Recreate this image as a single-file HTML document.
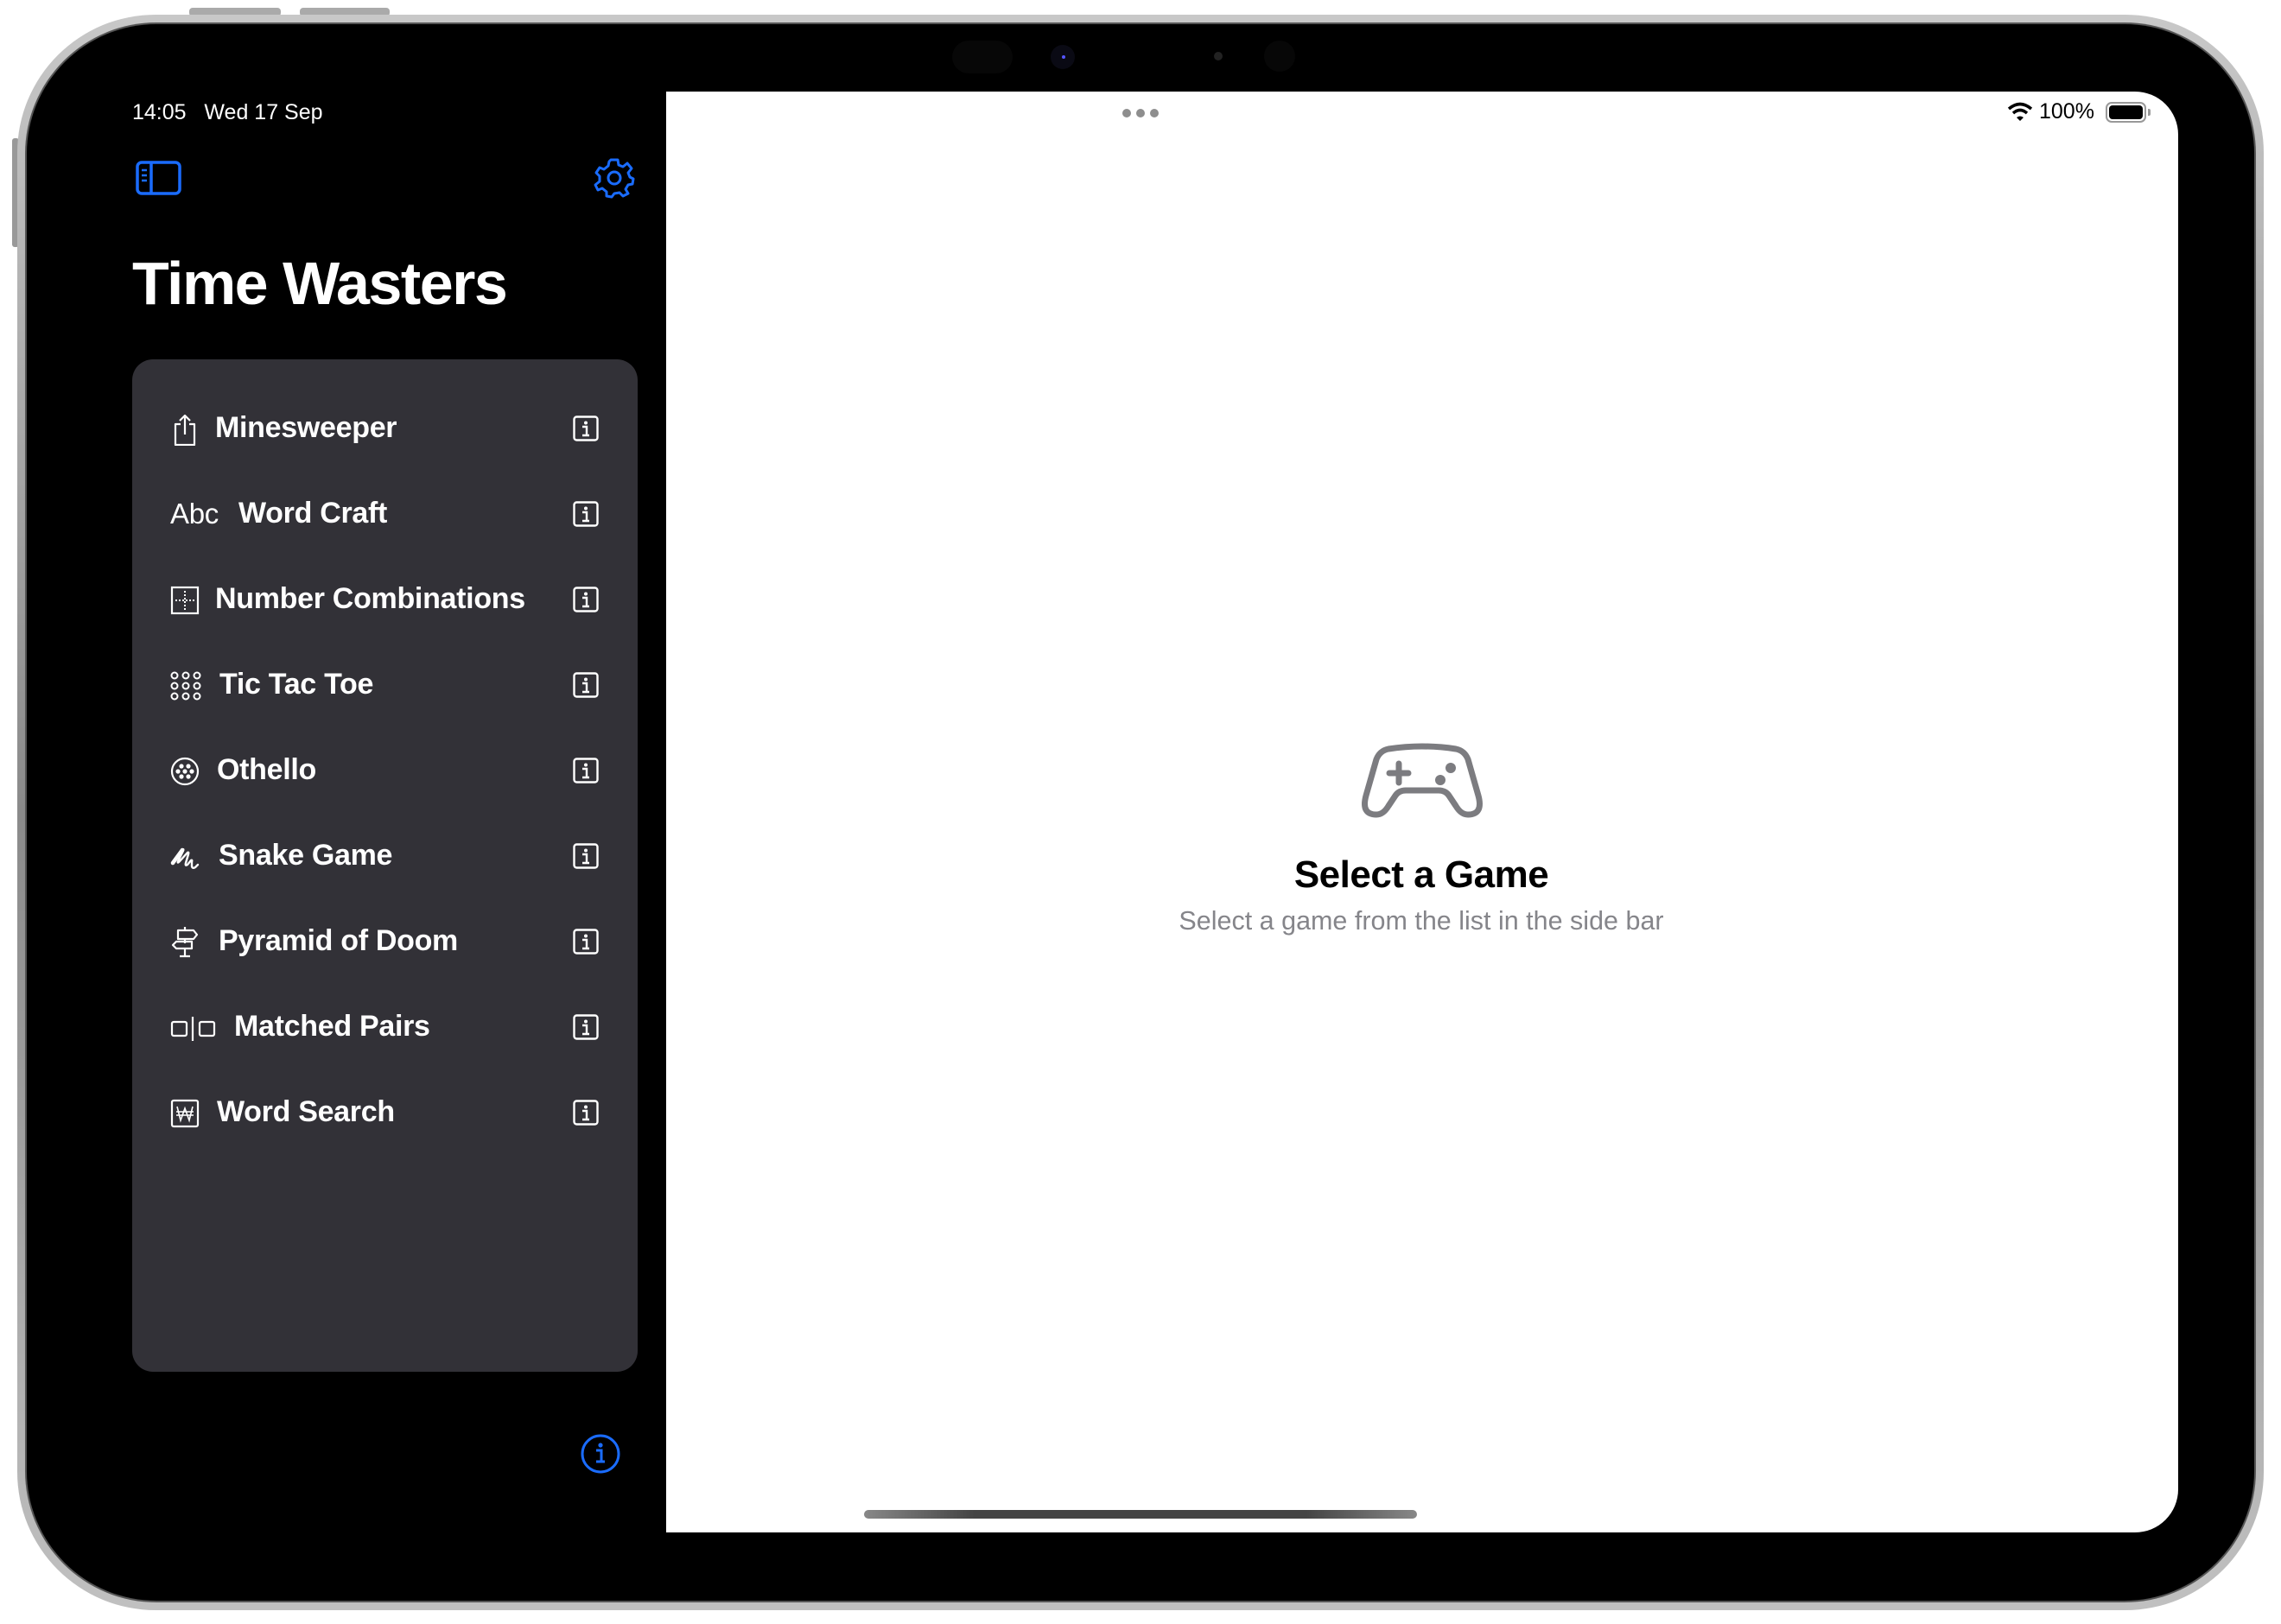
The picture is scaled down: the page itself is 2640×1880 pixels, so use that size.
<!DOCTYPE html>
<html><head><meta charset="utf-8"><style>
*{margin:0;padding:0;box-sizing:border-box}
body{width:2640px;height:1880px;background:#fff;position:relative;overflow:hidden;font-family:"Liberation Sans",sans-serif}
.abs{position:absolute}
.frame{left:20px;top:17px;width:2600px;height:1847px;border-radius:160px;background:linear-gradient(#c8c8c8,#8a8a8a 50%,#c0c0c0);}
.screen{left:31px;top:28px;width:2578px;height:1825px;border-radius:150px;background:#000;box-shadow:0 0 0 2px #555}
.white{left:771px;top:106px;width:1750px;height:1668px;background:#fff;border-radius:0 50px 50px 0}
.card{left:153px;top:416px;width:585px;height:1172px;background:#323137;border-radius:24px}
.row{position:absolute;left:0;width:585px;height:99px;display:flex;align-items:center;color:#fff;font-size:34px;font-weight:bold;letter-spacing:-0.3px}
.row .ic{position:absolute;left:44px;top:34px;width:34px;height:34px}
.row .t{position:absolute}
.row .inf{position:absolute;left:510px;top:35px;width:30px;height:30px}
</style></head><body>
<div class="abs" style="left:219px;top:9px;width:106px;height:10px;background:#aaa;border-radius:4px"></div>
<div class="abs" style="left:347px;top:9px;width:104px;height:10px;background:#aaa;border-radius:4px"></div>
<div class="abs" style="left:14px;top:160px;width:8px;height:126px;background:#999;border-radius:3px"></div>
<div class="abs frame"></div>
<div class="abs screen"></div>
<div class="abs" style="left:1102px;top:47px;width:70px;height:38px;border-radius:19px;background:#070707"></div>
<div class="abs" style="left:1216px;top:52px;width:28px;height:28px;border-radius:50%;background:#0a0a14"></div>
<div class="abs" style="left:1229px;top:64px;width:4px;height:4px;border-radius:50%;background:#55f"></div>
<div class="abs" style="left:1405px;top:60px;width:10px;height:10px;border-radius:50%;background:#222"></div>
<div class="abs" style="left:1463px;top:47px;width:36px;height:36px;border-radius:50%;background:#070707"></div>
<div class="abs white"></div>
<div class="abs" style="left:153px;top:116px;color:#fff;font-size:25px;white-space:pre">14:05   Wed 17 Sep</div>
<svg class="abs" style="left:156px;top:185px" width="56" height="42" viewBox="0 0 56 42"><rect x="3" y="3" width="49" height="36" rx="5" fill="none" stroke="#1a6cff" stroke-width="3.5"/><line x1="19" y1="3" x2="19" y2="39" stroke="#1a6cff" stroke-width="3.5"/><path d="M8 12h6M8 18h6M8 24h6" stroke="#1a6cff" stroke-width="2.5"/></svg>
<svg class="abs" style="left:686px;top:181px" width="50" height="50" viewBox="-25 -25 50 50"><g fill="none" stroke="#1a6cff" stroke-width="3"><path d="M-4 -21 L4 -21 L5 -15 L10 -13 L15 -17 L20 -11 L16 -6 L18 -1 L22 1 L21 7 L16 8 L13 13 L16 18 L10 21 L6 17 L0 18 L-3 22 L-9 21 L-9 16 L-14 12 L-19 14 L-22 8 L-17 4 L-17 -2 L-21 -6 L-17 -12 L-12 -10 L-7 -14 L-6 -19 Z" stroke-linejoin="round"/><circle r="7"/></g></svg>
<div class="abs" style="left:153px;top:288px;color:#fff;font-size:70px;font-weight:bold;letter-spacing:-1.5px">Time Wasters</div>
<div class="abs card">
<div class="row" style="top:30px"><svg class="ic" viewBox="0 0 34 34" style="top:30px;height:40px"><path d="M12 12H6v24h22V12h-6M17 2v22M11 8l6-6 6 6" fill="none" stroke="#fff" stroke-width="2.2" stroke-linejoin="round"/></svg><span class="t" style="left:96px">Minesweeper</span><svg class="inf" viewBox="0 0 30 30"><rect x="1.5" y="1.5" width="27" height="27" rx="3" fill="none" stroke="#fff" stroke-width="2.4"/><circle cx="15" cy="8.5" r="2" fill="#fff"/><path d="M11 13h5v10M11 23h8" stroke="#fff" stroke-width="2.4" fill="none"/></svg></div>
<div class="row" style="top:129px"><span class="t" style="left:44px;font-weight:normal;font-size:33px">Abc</span><span class="t" style="left:123px">Word Craft</span><svg class="inf" viewBox="0 0 30 30"><rect x="1.5" y="1.5" width="27" height="27" rx="3" fill="none" stroke="#fff" stroke-width="2.4"/><circle cx="15" cy="8.5" r="2" fill="#fff"/><path d="M11 13h5v10M11 23h8" stroke="#fff" stroke-width="2.4" fill="none"/></svg></div>
<div class="row" style="top:228px"><svg class="ic" viewBox="0 0 34 34"><rect x="2" y="2" width="30" height="30" fill="none" stroke="#fff" stroke-width="2.2"/><path d="M17 6v22M6 17h22" stroke="#fff" stroke-width="2" stroke-dasharray="2 2"/></svg><span class="t" style="left:96px">Number Combinations</span><svg class="inf" viewBox="0 0 30 30"><rect x="1.5" y="1.5" width="27" height="27" rx="3" fill="none" stroke="#fff" stroke-width="2.4"/><circle cx="15" cy="8.5" r="2" fill="#fff"/><path d="M11 13h5v10M11 23h8" stroke="#fff" stroke-width="2.4" fill="none"/></svg></div>
<div class="row" style="top:327px"><svg class="ic" viewBox="0 0 36 34" style="width:36px"><g fill="none" stroke="#fff" stroke-width="2"><circle cx="5" cy="5" r="3.5"/><circle cx="18" cy="5" r="3.5"/><circle cx="31" cy="5" r="3.5"/><circle cx="5" cy="17" r="3.5"/><circle cx="18" cy="17" r="3.5"/><circle cx="31" cy="17" r="3.5"/><circle cx="5" cy="29" r="3.5"/><circle cx="18" cy="29" r="3.5"/><circle cx="31" cy="29" r="3.5"/></g></svg><span class="t" style="left:101px">Tic Tac Toe</span><svg class="inf" viewBox="0 0 30 30"><rect x="1.5" y="1.5" width="27" height="27" rx="3" fill="none" stroke="#fff" stroke-width="2.4"/><circle cx="15" cy="8.5" r="2" fill="#fff"/><path d="M11 13h5v10M11 23h8" stroke="#fff" stroke-width="2.4" fill="none"/></svg></div>
<div class="row" style="top:426px"><svg class="ic" viewBox="0 0 34 34"><circle cx="17" cy="17" r="15" fill="none" stroke="#fff" stroke-width="2.2"/><g fill="#fff"><circle cx="13" cy="11" r="2.6"/><circle cx="21" cy="11" r="2.6"/><circle cx="9" cy="17" r="2.6"/><circle cx="17" cy="17" r="2.6"/><circle cx="25" cy="17" r="2.6"/><circle cx="13" cy="23" r="2.6"/><circle cx="21" cy="23" r="2.6"/></g></svg><span class="t" style="left:98px">Othello</span><svg class="inf" viewBox="0 0 30 30"><rect x="1.5" y="1.5" width="27" height="27" rx="3" fill="none" stroke="#fff" stroke-width="2.4"/><circle cx="15" cy="8.5" r="2" fill="#fff"/><path d="M11 13h5v10M11 23h8" stroke="#fff" stroke-width="2.4" fill="none"/></svg></div>
<div class="row" style="top:525px"><svg class="ic" viewBox="0 0 36 34" style="width:36px"><path d="M3 24L14 9Q16 7 15 10L9 22Q8 25 11 22L20 12Q22 11 21 14L18 24Q17 28 20 26L24 21Q26 20 25 23L25 28Q26 31 29 29L32 26" fill="none" stroke="#fff" stroke-width="2.4" stroke-linecap="round" stroke-linejoin="round"/><path d="M3 24L14 9" stroke="#fff" stroke-width="4.5" stroke-linecap="round"/></svg><span class="t" style="left:100px">Snake Game</span><svg class="inf" viewBox="0 0 30 30"><rect x="1.5" y="1.5" width="27" height="27" rx="3" fill="none" stroke="#fff" stroke-width="2.4"/><circle cx="15" cy="8.5" r="2" fill="#fff"/><path d="M11 13h5v10M11 23h8" stroke="#fff" stroke-width="2.4" fill="none"/></svg></div>
<div class="row" style="top:624px"><svg class="ic" viewBox="0 0 34 38" style="height:38px;top:31px"><g fill="none" stroke="#fff" stroke-width="2.2" stroke-linejoin="round"><path d="M17 2v4M17 17v4M17 27v9M11 36h12"/><path d="M9 6h18l4 5-4 5H9z"/><path d="M25 19H7l-4 4 4 4h18z"/></g></svg><span class="t" style="left:100px">Pyramid of Doom</span><svg class="inf" viewBox="0 0 30 30"><rect x="1.5" y="1.5" width="27" height="27" rx="3" fill="none" stroke="#fff" stroke-width="2.4"/><circle cx="15" cy="8.5" r="2" fill="#fff"/><path d="M11 13h5v10M11 23h8" stroke="#fff" stroke-width="2.4" fill="none"/></svg></div>
<div class="row" style="top:723px"><svg class="ic" viewBox="0 0 54 34" style="width:54px"><g fill="none" stroke="#fff" stroke-width="2.2"><rect x="2" y="10" width="17" height="16" rx="2"/><rect x="34" y="10" width="17" height="16" rx="2"/><path d="M26 4v28"/></g></svg><span class="t" style="left:118px">Matched Pairs</span><svg class="inf" viewBox="0 0 30 30"><rect x="1.5" y="1.5" width="27" height="27" rx="3" fill="none" stroke="#fff" stroke-width="2.4"/><circle cx="15" cy="8.5" r="2" fill="#fff"/><path d="M11 13h5v10M11 23h8" stroke="#fff" stroke-width="2.4" fill="none"/></svg></div>
<div class="row" style="top:822px"><svg class="ic" viewBox="0 0 34 34"><rect x="2" y="2" width="30" height="30" rx="2" fill="none" stroke="#fff" stroke-width="2.2"/><path d="M8 9l4 16 5-14 5 14 4-16M7 15h20M7 19h20" fill="none" stroke="#fff" stroke-width="1.6"/></svg><span class="t" style="left:98px">Word Search</span><svg class="inf" viewBox="0 0 30 30"><rect x="1.5" y="1.5" width="27" height="27" rx="3" fill="none" stroke="#fff" stroke-width="2.4"/><circle cx="15" cy="8.5" r="2" fill="#fff"/><path d="M11 13h5v10M11 23h8" stroke="#fff" stroke-width="2.4" fill="none"/></svg></div>
</div>
<svg class="abs" style="left:672px;top:1660px" width="46" height="46" viewBox="0 0 46 46"><circle cx="23" cy="23" r="21" fill="none" stroke="#1a6cff" stroke-width="3"/><circle cx="23" cy="13" r="2.6" fill="#1a6cff"/><path d="M18 19h6v13M18 32h10" stroke="#1a6cff" stroke-width="3" fill="none"/></svg>
<div class="abs" style="left:1299px;top:126px;width:10px;height:10px;border-radius:50%;background:#8e8e8e"></div>
<div class="abs" style="left:1315px;top:126px;width:10px;height:10px;border-radius:50%;background:#8e8e8e"></div>
<div class="abs" style="left:1331px;top:126px;width:10px;height:10px;border-radius:50%;background:#8e8e8e"></div>
<svg class="abs" style="left:2323px;top:118px" width="30" height="24" viewBox="0 0 30 24"><path d="M2 8Q15 -3 28 8" fill="none" stroke="#000" stroke-width="3.5"/><path d="M7 13Q15 6 23 13" fill="none" stroke="#000" stroke-width="3.5"/><path d="M11 18Q15 15 19 18L15 22Z" fill="#000"/></svg>
<div class="abs" style="left:2360px;top:115px;font-size:25px;color:#000">100%</div>
<div class="abs" style="left:2437px;top:118px;width:47px;height:24px;border:2px solid #999;border-radius:7px;padding:2px"><div style="width:100%;height:100%;background:#000;border-radius:4px"></div></div>
<div class="abs" style="left:2486px;top:126px;width:3px;height:8px;background:#999;border-radius:0 2px 2px 0"></div>
<svg class="abs" style="left:1574px;top:860px" width="144" height="88" viewBox="-3 -3 144 88"><path d="M30 4Q69 -2 108 4Q118 6 122 16L134 58Q140 80 122 80Q114 80 108 70L100 58Q96 52 88 52L50 52Q42 52 38 58L30 70Q24 80 16 80Q-2 80 4 58L16 16Q20 6 30 4Z" fill="none" stroke="#7c7c80" stroke-width="7" stroke-linejoin="round"/><path d="M42 21v22M31 32h22" stroke="#7c7c80" stroke-width="7" stroke-linecap="round"/><circle cx="90" cy="40" r="6" fill="#7c7c80"/><circle cx="102" cy="26" r="6" fill="#7c7c80"/></svg>
<div class="abs" style="left:1345px;top:988px;width:600px;text-align:center;font-size:44px;font-weight:bold;color:#000;letter-spacing:-0.5px">Select a Game</div>
<div class="abs" style="left:1245px;top:1049px;width:800px;text-align:center;font-size:30.5px;color:#85858a">Select a game from the list in the side bar</div>
<div class="abs" style="left:1000px;top:1748px;width:640px;height:10px;border-radius:5px;background:linear-gradient(90deg,#888,#444 20%,#444 80%,#888)"></div>
</body></html>
